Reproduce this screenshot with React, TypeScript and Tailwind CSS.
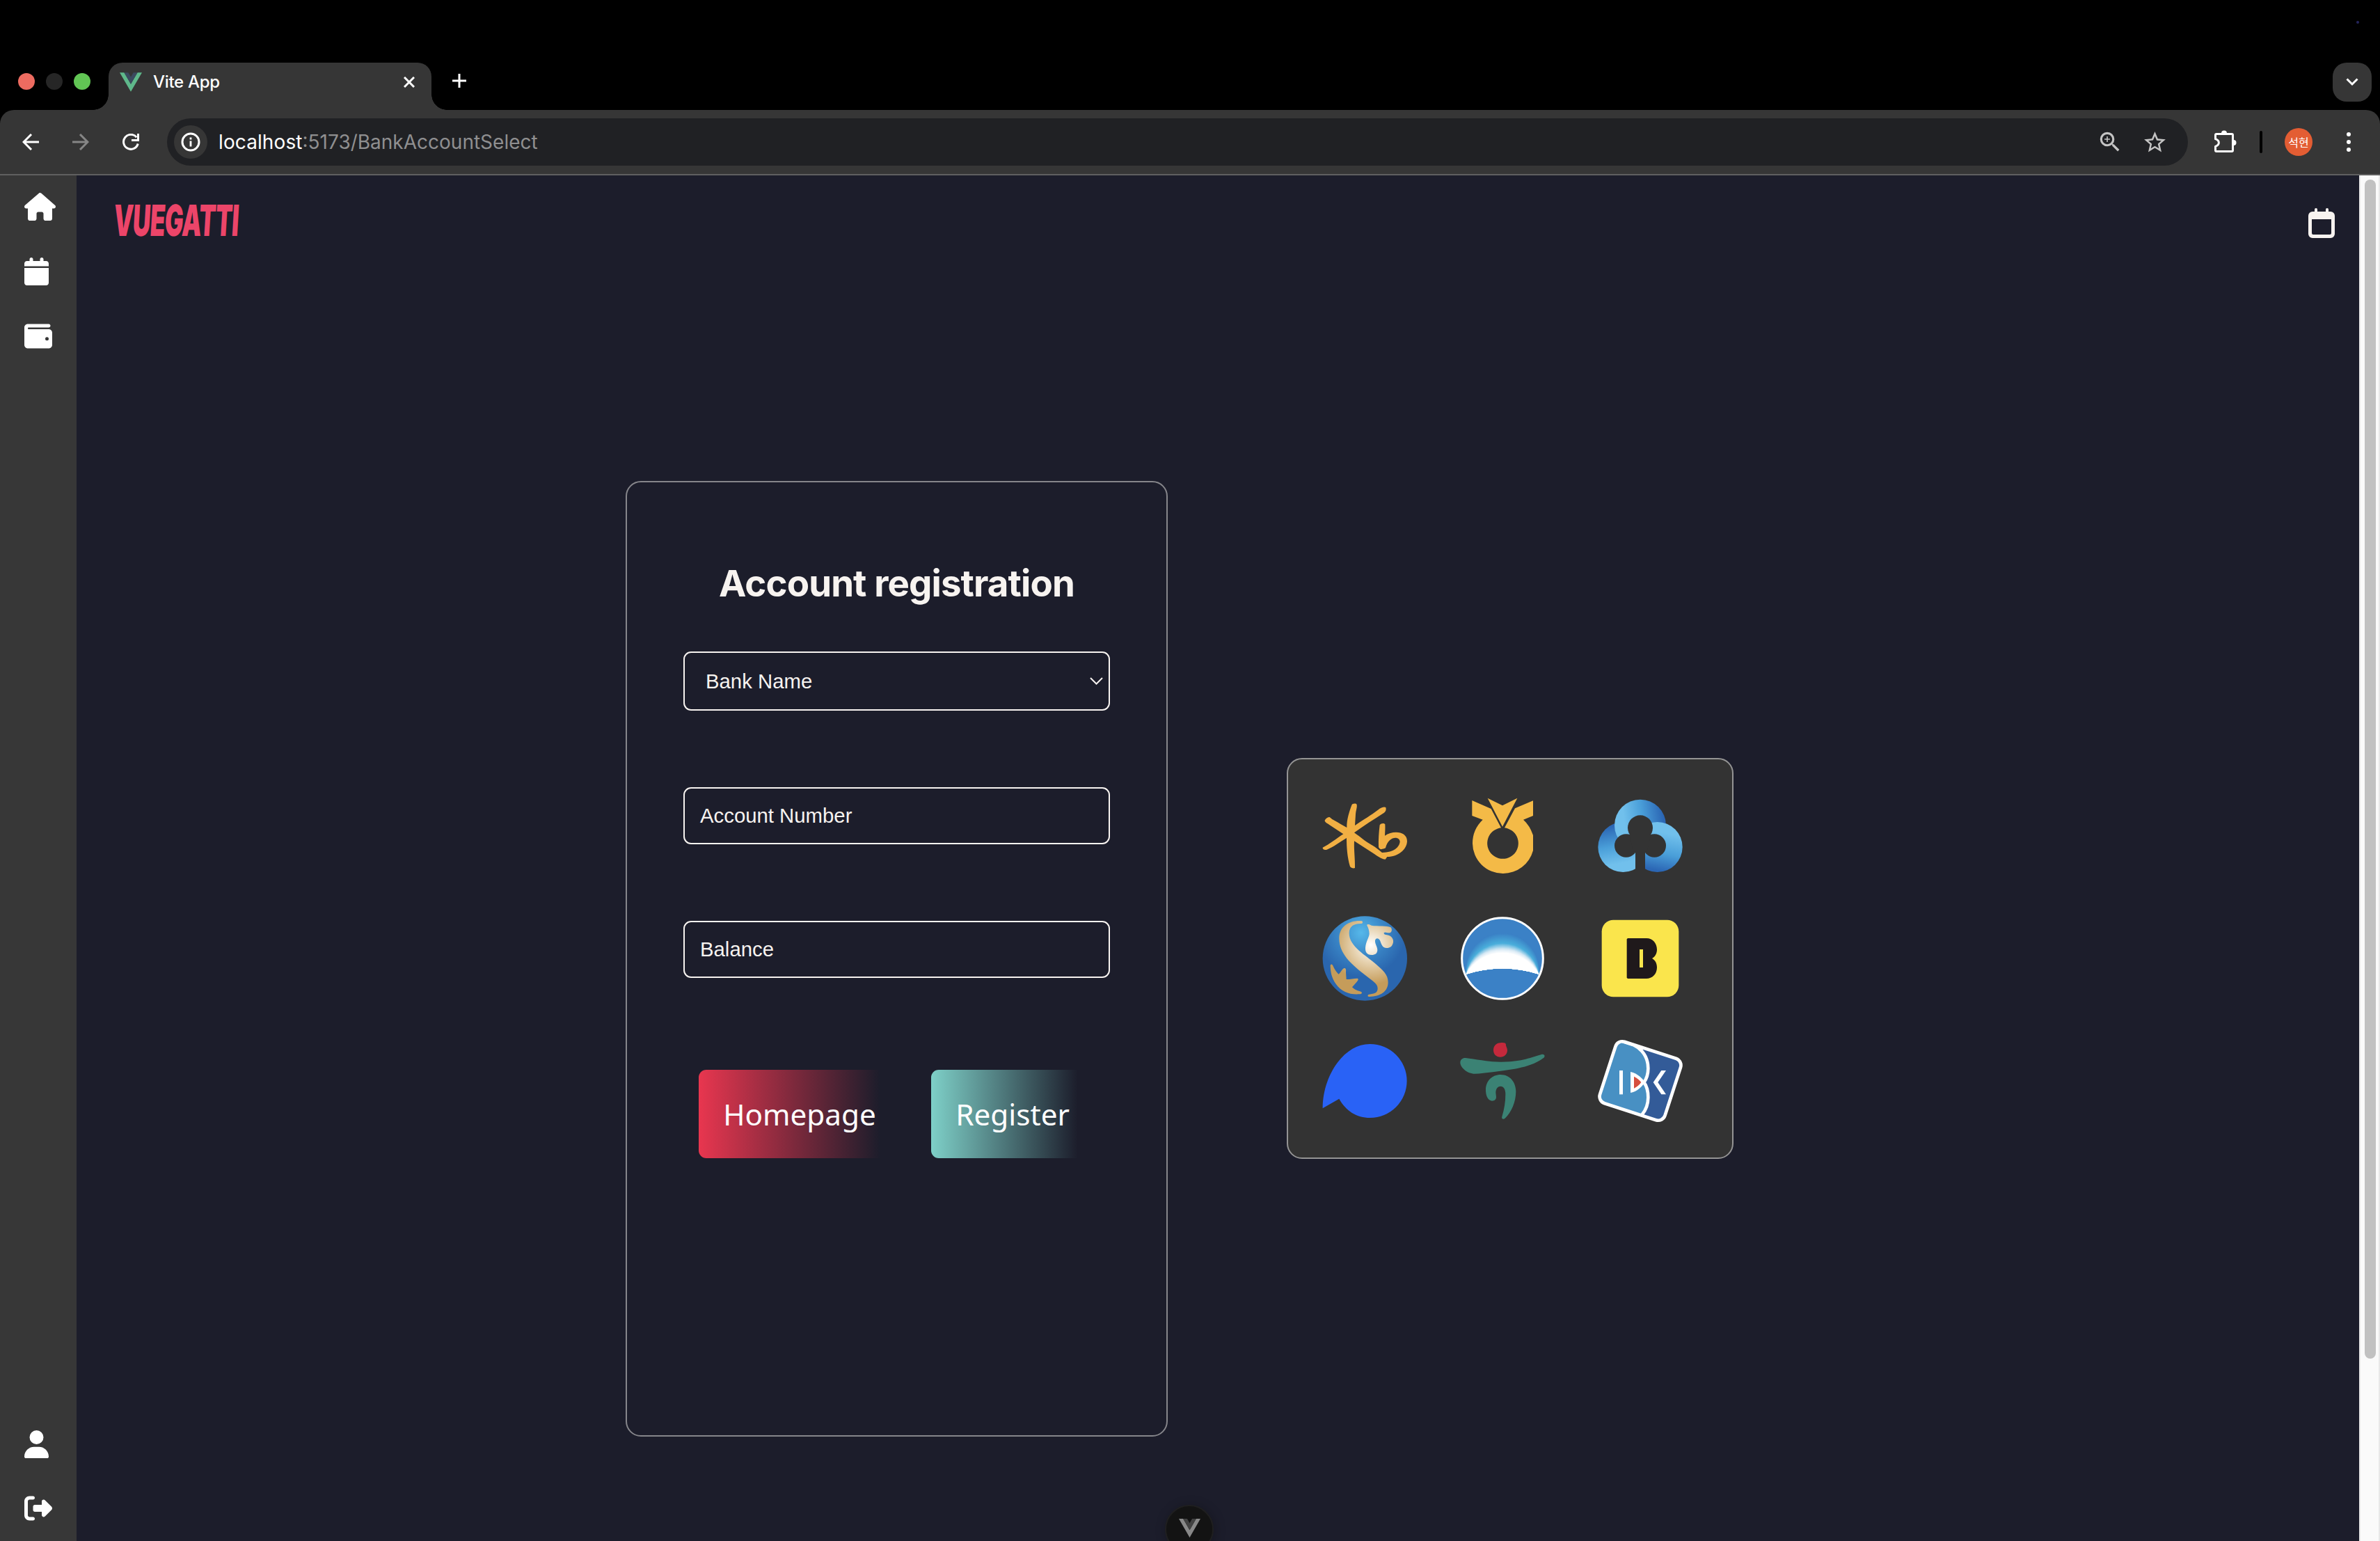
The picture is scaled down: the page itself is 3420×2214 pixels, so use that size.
import { FaCalendar, FaHouse, FaRightFromBracket, FaUser, FaWallet } from "react-icons/fa6";
import { MdStarBorder, MdZoomIn } from "react-icons/md";

function VueMark({ outer, inner, className }: { outer: string; inner: string; className: string }) {
  return (
    <svg viewBox="0 0 32 27.7" className={className}>
      <path d="M0 0h6.4L16 16.6 25.6 0H32L16 27.7z" fill={outer} />
      <path d="M6.4 0h5.9L16 6.4 19.7 0h5.9L16 16.6z" fill={inner} />
    </svg>
  );
}

function TabStrip() {
  return (
    <div className="flex h-[158px] shrink-0 items-end bg-black">
      <div className="flex h-[68px] w-[134px] gap-4 pt-[15px] pl-[26px]">
        <span className="size-6 rounded-full bg-[#ed6b60]" />
        <span className="size-6 rounded-full bg-[#262626]" />
        <span className="size-6 rounded-full bg-[#61c554]" />
      </div>
      <span className="size-[22px] bg-[radial-gradient(circle_at_0_0,transparent_21.5px,#363636_22px)]" />
      <div className="flex h-[68px] w-[464px] items-start rounded-t-[20px] bg-[#363636] pt-[10px] pr-6 pl-4">
        <VueMark outer="#5fb88b" inner="#3b4a5f" className="mt-[4px] h-[28px] w-8" />
        <span className="mt-px ml-[16px] text-[24px] leading-[34px] font-medium tracking-[-0.3px] text-white">
          Vite App
        </span>
        <svg viewBox="0 0 16 16" className="mt-[10px] ml-auto size-4" stroke="#fff" strokeWidth="3">
          <path d="M1 1l14 14M15 1L1 15" />
        </svg>
      </div>
      <span className="size-[22px] bg-[radial-gradient(circle_at_100%_0,transparent_21.5px,#363636_22px)]" />
      <svg viewBox="0 0 20 20" className="mb-[32px] ml-[8px] size-5" stroke="#fff" strokeWidth="3">
        <path d="M10 0v20M0 10h20" />
      </svg>
      <div className="relative mr-3 mb-3 ml-auto flex size-14 items-center justify-center rounded-[20px] bg-[#363636]">
        <svg viewBox="0 0 18 12" className="h-3 w-[18px]" fill="none" stroke="#fff" strokeWidth="3">
          <path d="M1.500 1.500L9 9l7.500-7.500" />
        </svg>
        <span className="absolute -top-[60px] left-[34px] size-1 rounded-full bg-[#25255c]" />
      </div>
    </div>
  );
}

function Toolbar() {
  return (
    <div className="h-[94px] shrink-0 bg-black">
      <div className="flex h-full items-center rounded-t-[20px] border-b-2 border-[#606060] bg-[#363636] pl-8">
        <svg viewBox="0 0 24 24" className="size-6" fill="none" stroke="#fff" strokeWidth="3">
          <path d="M24 12H2.500M13 1L2 12l11 11" />
        </svg>
        <svg viewBox="0 0 24 24" className="ml-12 size-6" fill="none" stroke="#868686" strokeWidth="3">
          <path d="M0 12h21.500M11 1l11 11-11 11" />
        </svg>
        <svg viewBox="0 0 24 24" className="ml-12 size-6" fill="none" stroke="#fff" strokeWidth="3">
          <path d="M22.200 14.500A10.500 10.500 0 1 1 20.200 5.200M22.500 0v9.500H13" />
        </svg>
        <div className="ml-[40px] flex h-[68px] w-[2904px] items-center rounded-full bg-[#202124] pl-[10px]">
          <span className="flex size-12 items-center justify-center rounded-full bg-[#363636]">
            <svg viewBox="0 0 28 28" className="size-7" fill="none" stroke="#fff">
              <circle cx="14" cy="14" r="12" strokeWidth="3" />
              <path d="M14 12.500v8M14 7.500v3" strokeWidth="2.800" />
            </svg>
          </span>
          <span className="ml-[16px] text-[28px] text-[#8f8f90]">
            <span className="tracking-[0.1px] text-white">localhost</span>:5173/BankAccountSelect
          </span>
          <MdZoomIn className="ml-auto size-[38px] text-[#c4c4c4]" />
          <MdStarBorder className="mr-[29px] ml-[27px] size-[37px] text-[#c4c4c4]" />
        </div>
        <svg viewBox="0 0 34 34" className="ml-[37px] size-[34px]" fill="none" stroke="#fff" strokeWidth="3">
          <path
            d="M4 6.500h22a1.500 1.500 0 0 1 1.500 1.500v22a1.500 1.500 0 0 1-1.500 1.500H4A1.500 1.500 0 0 1 2.500 30v-5.700c6.500-2.300 6.500-8.300 0-10.600V8A1.500 1.500 0 0 1 4 6.500z"
            strokeLinejoin="round"
            transform="translate(0 -1)"
          />
          <path d="M11 4.500a4 4 0 0 1 8 0zM28.500 14a4 4 0 0 1 0 8z" fill="#fff" stroke="none" />
        </svg>
        <span className="ml-[32px] h-8 w-1 rounded-full bg-black" />
        <span className="ml-8 flex size-10 items-center justify-center rounded-full bg-[#e35d33] font-['Noto_Sans_CJK_KR',sans-serif] text-[16px] text-white">
          석현
        </span>
        <div className="ml-[49px] flex flex-col gap-[5px]">
          <span className="size-[6px] rounded-full bg-white" />
          <span className="size-[6px] rounded-full bg-white" />
          <span className="size-[6px] rounded-full bg-white" />
        </div>
      </div>
    </div>
  );
}

function Sidebar() {
  return (
    <nav className="flex w-[110px] shrink-0 flex-col justify-between bg-[#373737] pt-[25px] pb-[27px] pl-[35px] text-white">
      <div className="flex flex-col gap-[52.8px]">
        <FaHouse className="h-10 w-[45px]" />
        <FaCalendar className="h-10 w-[35px]" />
        <FaWallet className="h-10 w-10" />
      </div>
      <div className="flex flex-col gap-[52px]">
        <FaUser className="h-10 w-[35px]" />
        <FaRightFromBracket className="h-10 w-10" />
      </div>
    </nav>
  );
}

function KbLogo() {
  return (
    <svg viewBox="0 0 480 480" className="size-40" fill="#f1af43">
      <path d="M187 80C189 73 206 71 209 78C211 90 206 100 204 120L201 168C240 140 270 125 300 101C315 89 328 86 334 90C337 102 333 110 322 116C280 143 240 168 198 199C225 218 250 240 272 251C292 262 305 274 318 285C370 284 392 262 395 238C394 212 345 212 333 265C327 269 320 269 314 271C308 269 304 266 303 260C302 230 304 198 308 166C314 158 326 157 331 163C332 180 331 195 330 212C365 188 426 192 426 236C424 272 388 302 340 303L332 314C322 314 305 306 285 291L198 235C196 275 202 310 201 351C195 354 184 351 180 345C168 305 165 262 165 222C135 240 110 260 80 272C68 275 61 269 62 263C90 250 120 225 151 205L94 167C80 157 70 153 71 146C75 137 86 131 92 132C105 145 125 152 138 161L166 177C165 140 178 105 187 80Z" />
    </svg>
  );
}

function NhLogo() {
  return (
    <svg viewBox="0 0 480 480" className="size-40" fill="#f4ba47">
      <path d="M106 60L188 96L231 178A67 67 0 1 0 246 178L291 94L369 61V126L327 143Q355 168 369 210V276A134 134 0 0 1 240 375A131 131 0 0 1 108 245Q108 185 152 143L106 126Z" />
      <path d="M173 50L237 82L301 50L237 173Z" />
    </svg>
  );
}

function CloverLogo() {
  return (
    <svg viewBox="0 0 480 480" className="size-40">
      <defs>
        <linearGradient id="clover-top" x1="0" y1="0.5" x2="1" y2="0.35">
          <stop offset="0.2" stopColor="#71c0ec" />
          <stop offset="0.55" stopColor="#4a9fd9" />
          <stop offset="0.95" stopColor="#2b66b4" />
        </linearGradient>
        <linearGradient id="clover-left" x1="0.4" y1="0" x2="0.6" y2="1">
          <stop offset="0.05" stopColor="#2b66b4" />
          <stop offset="0.45" stopColor="#4a9fd9" />
          <stop offset="0.8" stopColor="#71c0ec" />
        </linearGradient>
        <linearGradient id="clover-right" x1="0.6" y1="0" x2="0.4" y2="1">
          <stop offset="0.2" stopColor="#71c0ec" />
          <stop offset="0.6" stopColor="#4a9fd9" />
          <stop offset="0.95" stopColor="#2b66b4" />
        </linearGradient>
        <clipPath id="clover-half">
          <path d="M252 0H480V480H252Z" />
        </clipPath>
      </defs>
      <circle cx="157" cy="261" r="108" fill="url(#clover-left)" />
      <circle cx="231" cy="167" r="111" fill="url(#clover-top)" />
      <circle cx="305" cy="261" r="108" fill="url(#clover-right)" clipPath="url(#clover-half)" />
      <g fill="#333">
        <circle cx="231" cy="178" r="54" />
        <circle cx="170" cy="255" r="50" />
        <circle cx="292" cy="255" r="50" />
        <path d="M185 207H277L260 280H252V375H210V280H200Z" />
      </g>
    </svg>
  );
}

function ShinhanLogo() {
  return (
    <svg viewBox="0 510 480 480" className="size-40">
      <defs>
        <radialGradient id="globe" gradientUnits="userSpaceOnUse" cx="228" cy="630" r="190">
          <stop offset="0" stopColor="#56b8ea" />
          <stop offset="0.5" stopColor="#3b88c8" />
          <stop offset="1" stopColor="#2a66ae" />
        </radialGradient>
        <radialGradient id="gold" gradientUnits="userSpaceOnUse" cx="270" cy="683" r="170">
          <stop offset="0" stopColor="#ffffff" />
          <stop offset="0.45" stopColor="#e6d2b0" />
          <stop offset="1" stopColor="#c59c5a" />
        </radialGradient>
      </defs>
      <circle cx="244" cy="741" r="182" fill="url(#globe)" />
      <g fill="url(#gold)">
        <path d="M228 579C180 576 133 600 133 655C133 720 185 765 235 805C275 838 299 848 299 870C299 890 285 893 262 896C254 898 255 906 264 906C310 904 344 885 344 843C344 810 320 790 290 764C250 728 176 690 176 632C176 600 200 590 228 591C236 591 237 580 228 579Z" />
        <path d="M254 601C248 592 262 592 272 599C300 603 340 599 355 607C362 612 362 630 350 631C340 632 333 625 326 630C325 640 335 638 348 642C362 648 368 660 366 672C362 690 352 696 338 696C318 696 316 680 309 664C303 652 290 652 288 664C287 680 298 690 298 705C297 720 288 726 273 726C252 726 245 712 246 695C248 668 262 650 263 635C263 622 259 610 254 601Z" />
        <path d="M95 773C95 764 103 765 106 772C113 788 123 803 131 809C139 803 144 788 154 783C163 782 163 790 162 800L164 831C175 832 195 827 211 827C220 829 212 838 209 842L189 865C200 877 215 880 228 885C234 890 230 894 222 895C180 898 145 888 118 850C100 822 96 800 95 773Z" />
      </g>
    </svg>
  );
}

const glowStops: [number, [number, number, number]][] = [
  [0, [59, 129, 198]],
  [0.5, [74, 174, 219]],
  [0.8, [214, 232, 244]],
  [1, [255, 255, 255]],
];

function glowColor(t: number) {
  const next = Math.max(1, glowStops.findIndex(([stop]) => stop >= t));
  const [from, a] = glowStops[next - 1];
  const [to, b] = glowStops[next];
  const k = (t - from) / (to - from);
  return `rgb(${a.map((value, i) => Math.round(value + (b[i] - value) * k)).join(",")})`;
}

function WooriLogo() {
  const steps = 30;
  const arcs = Array.from({ length: steps + 1 }, (_, i) => {
    const t = i / steps;
    const sagitta = 178 - 85 * t;
    const radius = (157 * 157 + sagitta * sagitta) / (2 * sagitta);
    return { radius, sagitta, large: sagitta > 157 ? 1 : 0, color: glowColor(t) };
  });
  return (
    <svg viewBox="0 510 480 480" className="size-40">
      <circle cx="237" cy="741" r="175" fill="#3b81c6" />
      {arcs.map(({ radius, sagitta, large, color }) => (
        <path key={sagitta} d={`M80 809A${radius} ${radius} 0 ${large} 1 394 809A530 530 0 0 0 80 809Z`} fill={color} />
      ))}
      <circle cx="237" cy="741" r="175" fill="none" stroke="#fff" strokeWidth="9" />
    </svg>
  );
}

function KakaoBadge() {
  return (
    <svg viewBox="0 510 480 480" className="size-40">
      <rect x="65" y="575" width="332" height="332" rx="50" fill="#fae54c" />
      <path
        d="M177 654H258C285 654 303 676 303 703C303 720 295 734 282 741C295 748 303 762 303 780C303 808 283 828 257 828H177L173 824V658Z"
        fill="#1f191b"
      />
      <rect x="228" y="702" width="15" height="78" fill="#fae54c" />
    </svg>
  );
}

function SpeechLogo() {
  return (
    <svg viewBox="0 1020 480 480" className="size-40" fill="#2962f6">
      <path d="M62 1387C62 1250 150 1110 266 1110A159 159 0 0 1 266 1428C208 1428 162 1398 133 1346Z" />
    </svg>
  );
}

function HanaLogo() {
  return (
    <svg viewBox="0 1020 480 480" className="size-40" fill="#3b8274">
      <path
        d="M228 1105C238 1103 252 1104 252 1112C251 1120 258 1125 258 1137C257 1155 245 1166 228 1166C210 1166 198 1153 198 1136C198 1118 211 1105 228 1105Z"
        fill="#c4293c"
      />
      <path d="M78 1170C120 1174 170 1187 230 1187C310 1187 350 1172 405 1155C420 1152 422 1164 414 1170C380 1195 340 1208 290 1217C220 1227 165 1236 118 1238C85 1238 55 1210 55 1190C55 1177 65 1169 78 1170Z" />
      <path d="M229 1242C270 1242 295 1275 295 1315C295 1360 275 1405 248 1430C240 1437 232 1432 235 1423C245 1390 250 1360 250 1325C250 1305 242 1292 229 1292C215 1292 208 1305 208 1320L210 1338C210 1350 202 1355 192 1355C172 1353 165 1330 165 1308C165 1268 193 1242 229 1242Z" />
    </svg>
  );
}

function IbkLogo() {
  return (
    <svg viewBox="0 1020 480 480" className="size-40">
      <defs>
        <clipPath id="ibk-tile">
          <rect x="83.500" y="1129.500" width="295" height="279" rx="31" transform="rotate(18 231 1269)" />
        </clipPath>
      </defs>
      <g clipPath="url(#ibk-tile)">
        <path d="M0 1020H480V1500H0Z" fill="#4890c3" />
        <path
          d="M160 1099C230 1110 265 1160 265 1215C265 1240 258 1260 247 1275C258 1290 265 1315 265 1340C265 1365 255 1395 238 1415L300 1500H480V1020H160Z"
          fill="#335b98"
        />
        <path
          d="M155 1099C230 1110 265 1160 265 1215C265 1240 258 1260 247 1275C258 1290 265 1315 265 1340C265 1365 255 1395 238 1415M155 1099L245 1127"
          fill="none"
          stroke="#fff"
          strokeWidth="14"
        />
        <path d="M175 1100L250 1128L240 1134Z" fill="#fff" />
      </g>
      <rect
        x="83.500"
        y="1129.500"
        width="295"
        height="279"
        rx="31"
        transform="rotate(18 231 1269)"
        fill="none"
        stroke="#fff"
        strokeWidth="14"
      />
      <g fill="#fff">
        <path d="M141 1224H156V1327H141Z" />
        <path d="M342 1224H322L287 1275L322 1327H342L307 1275Z" />
        <path d="M189 1230C220 1237 243 1260 250 1275C243 1290 215 1318 189 1320Z" />
      </g>
      <path d="M204 1250Q224 1260 235 1275Q224 1291 204 1301Z" fill="#d64f3e" />
    </svg>
  );
}

const fieldClass =
  "flex w-[613px] items-center rounded-[11px] border-2 border-[#f7f3f0] font-['Liberation_Sans',Arial,sans-serif] text-[29.33px] text-[#f7f3f0]";

function RegistrationCard() {
  return (
    <section className="flex h-[1373px] w-[779px] shrink-0 flex-col items-center rounded-[22px] border-2 border-[#86868b] pt-[113px]">
      <h1 className="text-[52.8px] leading-[64px] font-bold tracking-[-0.9px] text-[#f7f3f0]">Account registration</h1>
      <div className={`${fieldClass} mt-[66px] h-[85px] justify-between pr-[8px] pl-[30px]`}>
        <span>Bank Name</span>
        <svg viewBox="0 0 19 11" className="h-[11px] w-[19px]" fill="none" stroke="#f7f3f0" strokeWidth="2">
          <path d="M1 1l8.500 8.500L18 1" />
        </svg>
      </div>
      <div className={`${fieldClass} mt-[110px] h-[82px] pl-[22px]`}>Account Number</div>
      <div className={`${fieldClass} mt-[110px] h-[82px] pl-[22px]`}>Balance</div>
      <div className="mt-[132px] flex w-[613px] gap-[44px] pl-[22px] font-['Noto_Sans',sans-serif] text-[42.24px] text-white">
        <button className="h-[127px] rounded-[11px] bg-[linear-gradient(90deg,#e8364f,transparent_90%)] px-[35.200px]">
          Homepage
        </button>
        <button className="h-[127px] rounded-[11px] bg-[linear-gradient(90deg,#7ed0c8,transparent_90%)] px-[35.200px]">
          Register
        </button>
      </div>
    </section>
  );
}

function BankPanel() {
  return (
    <section className="mb-[2px] grid h-[576px] w-[642px] shrink-0 grid-cols-[160px_160px_160px] content-start gap-x-10 gap-y-[10px] rounded-[22px] border-2 border-[#949494] bg-[#333] pt-[39px] pl-[29px]">
      <KbLogo />
      <NhLogo />
      <CloverLogo />
      <ShinhanLogo />
      <WooriLogo />
      <KakaoBadge />
      <SpeechLogo />
      <HanaLogo />
      <IbkLogo />
    </section>
  );
}

export default function App() {
  return (
    <div className="flex h-[2214px] w-[3420px] flex-col overflow-hidden bg-[#1c1d2b] font-['Inter',sans-serif]">
      <TabStrip />
      <Toolbar />
      <div className="flex min-h-0 flex-1">
        <Sidebar />
        <main className="relative flex-1">
          <header className="flex h-[120px] items-start justify-between pt-[40px] pr-[35px] pl-[55px]">
            <span className="inline-block origin-top-left -skew-x-6 scale-x-[0.57] text-[62px] leading-[50px] font-black tracking-[-1px] text-[#ec4569]">
              VUEGATTI
            </span>
            <svg viewBox="0 0 38 43" className="mt-[7px] h-[43px] w-[38px]" fill="#f7f3f0">
              <path
                fillRule="evenodd"
                d="M9 2a2 2 0 0 1 4 0v3h12V2a2 2 0 0 1 4 0v3h3a6 6 0 0 1 6 6v26a6 6 0 0 1-6 6H6a6 6 0 0 1-6-6V11a6 6 0 0 1 6-6h3zM5 16v20q0 2 2 2h24q2 0 2-2V16z"
              />
            </svg>
          </header>
          <div className="flex items-center gap-[171px] pt-[319px] pl-[789px]">
            <RegistrationCard />
            <BankPanel />
          </div>
          <div className="absolute -bottom-[18px] left-[1564px] flex h-[70px] w-[70px] justify-center rounded-full border-2 border-[#1f1f20] bg-[#131313] pt-[18px] shadow-[2px_2px_16px_rgba(0,0,0,0.25)]">
            <VueMark outer="#888888" inner="#424242" className="h-[27px] w-[31px]" />
          </div>
        </main>
        <aside className="w-[30px] shrink-0 border-x-2 border-[#e8e8e8] bg-[#fafafa] pt-[6px] pl-[6px]">
          <div className="h-[1694px] w-4 rounded-full bg-[#c1c1c1]" />
        </aside>
      </div>
    </div>
  );
}
